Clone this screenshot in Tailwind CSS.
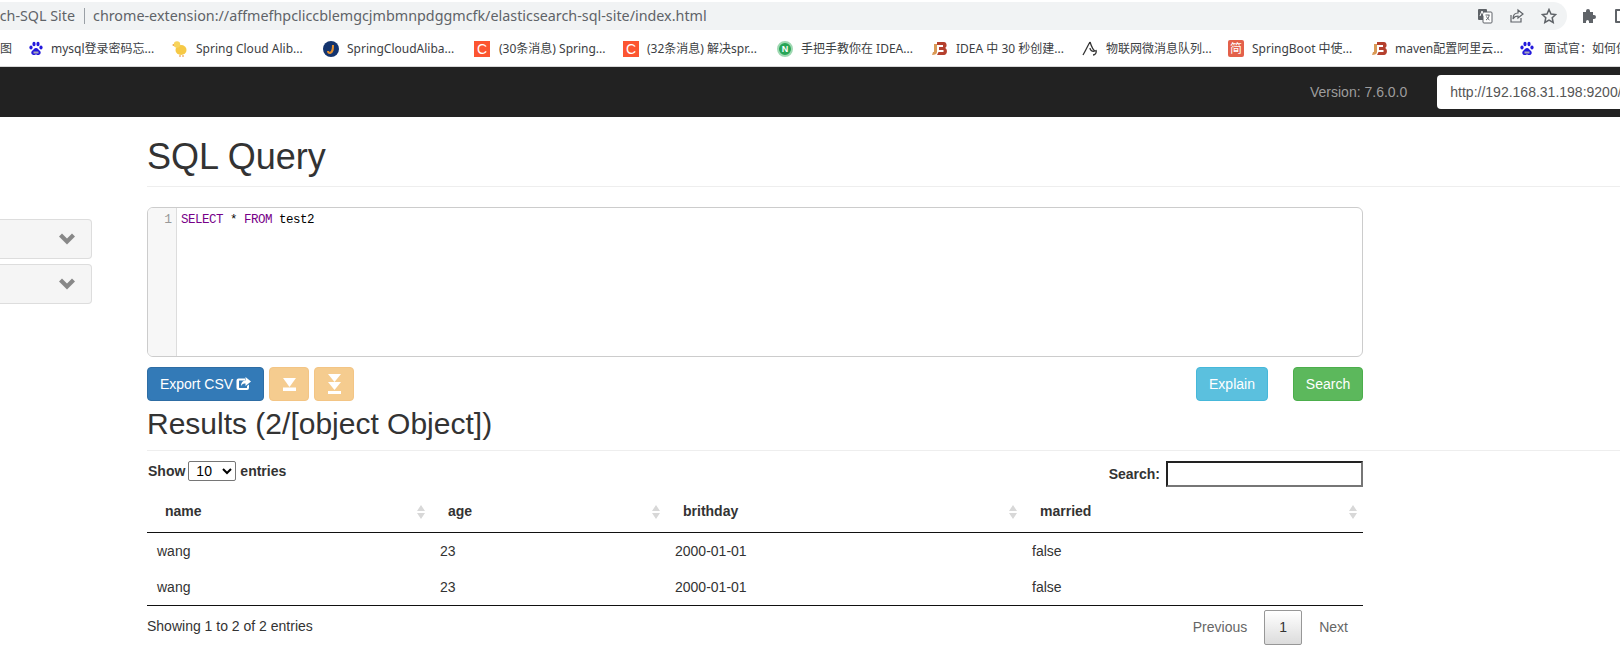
<!DOCTYPE html>
<html lang="en">
<head>
<meta charset="utf-8">
<title>Elasticsearch-SQL Site</title>
<script src="https://cdn.jsdelivr.net/npm/@tailwindcss/browser@4"></script>
</head>
<body class="w-[1620px] h-[666px] overflow-hidden bg-white text-[#333] font-['Liberation_Sans','Noto_Sans_CJK_SC',sans-serif] text-[14px]">

<!-- browser address bar -->
<div class="h-[31px] pt-[2px] flex items-start overflow-hidden font-['Noto_Sans','Noto_Sans_CJK_SC',sans-serif]">
  <div class="w-[1567px] h-[28px] bg-[#f1f3f4] rounded-r-[14px] flex items-center shrink-0">
    <div class="w-[75px] overflow-hidden whitespace-nowrap flex justify-end text-[14.300px] text-[#5f6368] shrink-0">ch-SQL Site</div>
    <div class="w-px h-[16px] bg-[#9aa0a6] ml-[9px] mr-[8px] shrink-0"></div>
    <div class="text-[14.340px] text-[#5f6368] whitespace-nowrap">chrome-extension://affmefhpcliccblemgcjmbmnpdggmcfk/elasticsearch-sql-site/index.html</div>
    <div class="ml-auto flex items-center gap-[16px] pr-[10px]">
      <svg width="16" height="16" viewBox="0 0 16 16"><rect x="1" y="1" width="9" height="11" rx="1" fill="#5f6368"/><rect x="6" y="4" width="9" height="11" rx="1" fill="#fff" stroke="#5f6368"/><path d="M3 8l2-5 2 5" fill="none" stroke="#fff"/><path d="M8.500 7h4M9 12c2-1 3-3 3-5M9.500 8.500c1 2 2 3 3 3.500" fill="none" stroke="#5f6368"/></svg>
      <svg width="16" height="16" viewBox="0 0 16 16" fill="none" stroke="#5f6368" stroke-width="1.200"><path d="M2 7v7h10V10"/><path d="M9 2l5 4-5 4V8C6 8 5 9 4 11c0-4 2-6 5-6z"/></svg>
      <svg width="16" height="16" viewBox="0 0 16 16" fill="none" stroke="#5f6368" stroke-width="1.500"><path d="M8 1.500l2 4.500 4.700.5-3.500 3.200 1 4.800L8 12.100l-4.200 2.400 1-4.800L1.300 6.500 6 6z"/></svg>
    </div>
  </div>
  <div class="flex items-center gap-[18px] h-[28px] pl-[14px] shrink-0">
    <svg width="16" height="16" viewBox="0 0 16 16" fill="#5f6368"><path d="M2 4h3V3a2 2 0 0 1 4 0v1h3v3h1a2 2 0 0 1 0 4h-1v4H8v-1.500a1.500 1.500 0 0 0-3 0V15H2z"/></svg>
    <div class="w-[14px] h-[14px] border-2 border-[#5f6368] rounded-[1px] shrink-0"></div>
  </div>
</div>

<!-- bookmarks -->
<div class="h-[35px] flex items-center whitespace-nowrap overflow-hidden text-[12px] text-[#3c4043] font-['Noto_Sans','Noto_Sans_CJK_SC',sans-serif]">
  <div class="w-[29px] shrink-0 overflow-hidden">图</div>
  <div class="w-[143px] shrink-0 flex items-center gap-[8px]">
    <svg width="14" height="16" viewBox="0 0 14 16" fill="#2319dc"><ellipse cx="2" cy="6.500" rx="1.600" ry="2"/><ellipse cx="5" cy="3" rx="1.600" ry="2.200"/><ellipse cx="9" cy="3" rx="1.600" ry="2.200"/><ellipse cx="12" cy="6.500" rx="1.600" ry="2"/><path d="M7 7c2 0 2.500 2 4 3 1.500 1.500.5 4-2 4-1 0-1.500-.5-2-.5s-1 .5-2 .5c-2.500 0-3.500-2.500-2-4 1.500-1 2-3 4-3z"/><path d="M4.500 10.500h5v2h-5z" fill="#aab"/></svg>
    <span>mysql登录密码忘...</span>
  </div>
  <div class="w-[151px] shrink-0 flex items-center gap-[8px]">
    <svg width="16" height="18" viewBox="0 0 16 18"><ellipse cx="9" cy="10" rx="5.500" ry="5" fill="#f6c945"/><circle cx="5" cy="4.500" r="3.200" fill="#f8d45c"/><path d="M2 4L0 5l2 1z" fill="#e8912d"/><path d="M8 15v2M11 15v2" stroke="#e8912d"/></svg>
    <span>Spring Cloud Alib...</span>
  </div>
  <div class="w-[151px] shrink-0 flex items-center gap-[8px]">
    <svg width="16" height="16" viewBox="0 0 16 16"><circle cx="8" cy="8" r="8" fill="#14346e"/><path d="M10 4c0 4 0 7-3 8-1 0-2-1-2-2" fill="none" stroke="#e8912d" stroke-width="2"/></svg>
    <span>SpringCloudAliba...</span>
  </div>
  <div class="w-[149px] shrink-0 flex items-center gap-[9px]">
    <div class="w-[16px] h-[16px] bg-[#fc5531] text-white text-[14px] leading-[16px] text-center font-['Liberation_Sans']">C</div>
    <span>(30条消息) Spring...</span>
  </div>
  <div class="w-[154px] shrink-0 flex items-center gap-[8px]">
    <div class="w-[16px] h-[16px] bg-[#fc5531] text-white text-[14px] leading-[16px] text-center font-['Liberation_Sans']">C</div>
    <span>(32条消息) 解决spr...</span>
  </div>
  <div class="w-[154px] shrink-0 flex items-center gap-[8px]">
    <div class="w-[16px] h-[16px] rounded-full bg-[#27a556] border-2 border-[#9fd8b2] text-white text-[9px] font-bold leading-[12px] text-center font-['Liberation_Sans']">N</div>
    <span>手把手教你在 IDEA...</span>
  </div>
  <div class="w-[151px] shrink-0 flex items-center gap-[8px]">
    <svg width="17" height="15" viewBox="0 0 17 15"><path d="M6 1h7c3 0 3.500 5 1 6 3 1 2.500 7-1 7H6l1.500-3h5V9H8V6h4V4H6z" fill="#b5402e"/><path d="M3 3h3v8c0 2-2 3-5 3l1-3c1 0 1 0 1-1z" fill="#d99a55"/></svg>
    <span>IDEA 中 30 秒创建...</span>
  </div>
  <div class="w-[146px] shrink-0 flex items-center gap-[8px]">
    <svg width="16" height="16" viewBox="0 0 16 16" fill="none" stroke="#333" stroke-width="1.300"><path d="M8 1C6 4 4 9 1 14M8 1c1 3 3 8 5 9-3 1-5-1-5-3M11 14c2 0 4-2 3-5"/></svg>
    <span>物联网微消息队列...</span>
  </div>
  <div class="w-[143px] shrink-0 flex items-center gap-[8px]">
    <div class="w-[16px] h-[17px] bg-[#e3604a] rounded-[2px] text-white text-[12px] leading-[17px] text-center">简</div>
    <span>SpringBoot 中使...</span>
  </div>
  <div class="w-[149px] shrink-0 flex items-center gap-[7px]">
    <svg width="17" height="15" viewBox="0 0 17 15"><path d="M6 1h7c3 0 3.500 5 1 6 3 1 2.500 7-1 7H6l1.500-3h5V9H8V6h4V4H6z" fill="#b5402e"/><path d="M3 3h3v8c0 2-2 3-5 3l1-3c1 0 1 0 1-1z" fill="#d99a55"/></svg>
    <span>maven配置阿里云...</span>
  </div>
  <div class="flex items-center gap-[10px] shrink-0">
    <svg width="14" height="16" viewBox="0 0 14 16" fill="#2319dc"><ellipse cx="2" cy="6.500" rx="1.600" ry="2"/><ellipse cx="5" cy="3" rx="1.600" ry="2.200"/><ellipse cx="9" cy="3" rx="1.600" ry="2.200"/><ellipse cx="12" cy="6.500" rx="1.600" ry="2"/><path d="M7 7c2 0 2.500 2 4 3 1.500 1.500.5 4-2 4-1 0-1.500-.5-2-.5s-1 .5-2 .5c-2.500 0-3.500-2.500-2-4 1.500-1 2-3 4-3z"/><path d="M4.500 10.500h5v2h-5z" fill="#aab"/></svg>
    <span>面试官：如何保证...</span>
  </div>
</div>

<!-- navbar -->
<div class="h-[50px] bg-[#222] border-t border-[#d8d8d8] flex items-center whitespace-nowrap box-content">
  <div class="ml-[1310px] text-[#9d9d9d] shrink-0">Version: 7.6.0.0</div>
  <input class="ml-[30px] w-[260px] h-[34px] px-[13px] rounded-[4px] bg-white text-[#555] text-[14px] shrink-0" value="http://192.168.31.198:9200/">
</div>

<div class="flex">
  <!-- sidebar -->
  <div class="w-[92px] shrink-0 mr-[55px] pt-[102px] flex flex-col gap-[5px]">
    <div class="h-[40px] bg-[#f5f5f5] border border-[#ddd] border-l-0 rounded-r-[4px] flex items-center justify-end pr-[16px]">
      <svg width="16" height="12" viewBox="0 0 16 12" fill="#888"><path d="M0 3.500L3 .500l5 5 5-5 3 3-8 8z"/></svg>
    </div>
    <div class="h-[40px] bg-[#f5f5f5] border border-[#ddd] border-l-0 rounded-r-[4px] flex items-center justify-end pr-[16px]">
      <svg width="16" height="12" viewBox="0 0 16 12" fill="#888"><path d="M0 3.500L3 .500l5 5 5-5 3 3-8 8z"/></svg>
    </div>
  </div>

  <!-- main column -->
  <div class="flex-1 min-w-0">
    <div class="pt-[20px] pb-[9px] border-b border-[#eee]">
      <h1 class="text-[36px] leading-[40px] font-normal">SQL Query</h1>
    </div>

    <div class="w-[1216px]">
      <div class="mt-[20px] h-[150px] border border-[#ccc] rounded-[6px] flex overflow-hidden font-['Liberation_Mono',monospace] leading-[15px]">
        <div class="w-[29px] bg-[#f7f7f7] border-r border-[#ddd] text-right pr-[4px] pt-[4px] text-[#999] text-[13px] shrink-0">1</div>
        <div class="pl-[4px] pt-[5px] text-black whitespace-pre text-[12.500px] tracking-[-0.500px]"><span class="text-[#708]">SELECT</span> * <span class="text-[#708]">FROM</span> test2</div>
      </div>

      <div class="mt-[10px] flex h-[34px]">
        <button class="w-[117px] bg-[#337ab7] border border-[#2e6da4] rounded-[4px] text-white flex items-center justify-center gap-[3px]">
          Export CSV
          <svg width="15" height="14" viewBox="0 0 15 14" fill="#fff"><path d="M2.500 1.500H9v2H3.500a.5.5 0 0 0-.5.5v6.500c0 .3.200.5.5.5h7a.5.5 0 0 0 .5-.5V9l2-1.500v3.500a2 2 0 0 1-2 2H2.500a2 2 0 0 1-2-2V3.500a2 2 0 0 1 2-2z"/><path d="M9.500 0L15 4.500 9.500 9V6.500C7.500 6.500 6 7 5 9c0-3 1.500-5.500 4.500-5.500z"/></svg>
        </button>
        <button class="ml-[5px] w-[40px] bg-[#f5cc8f] border border-[#f3c585] rounded-[4px] flex items-center justify-center">
          <svg width="13" height="13" viewBox="0 0 13 13" fill="#fff"><path d="M0 0h13L6.500 9z"/><rect y="9.500" width="13" height="3.500"/></svg>
        </button>
        <button class="ml-[5px] w-[40px] bg-[#f5cc8f] border border-[#f3c585] rounded-[4px] flex items-center justify-center">
          <svg width="13" height="20" viewBox="0 0 13 20" fill="#fff"><path d="M0 0h13L6.500 8z"/><path d="M0 8h13l-6.500 8z"/><rect y="17" width="13" height="3"/></svg>
        </button>
        <button class="ml-auto w-[72px] bg-[#5bc0de] border border-[#46b8da] rounded-[4px] text-white">Explain</button>
        <button class="ml-[25px] w-[70px] bg-[#5cb85c] border border-[#4cae4c] rounded-[4px] text-white">Search</button>
      </div>
    </div>

    <div class="mt-[6px] pb-[10px] border-b border-[#eee]">
      <h2 class="text-[30px] leading-[33px] font-normal">Results (2/[object Object])</h2>
    </div>

    <div class="w-[1216px] mt-[10px]">
      <div class="flex justify-between items-start h-[31px]">
        <label class="flex items-center h-[20px] pl-[1px] font-bold text-[14px]">Show
          <select class="ml-[3px] mr-[4px] w-[48px] h-[20px] border border-[#767676] rounded-[2px] pl-[3px] font-normal text-[14px] text-black">
            <option>10</option>
          </select>
          entries</label>
        <label class="flex items-center font-bold text-[14px]">Search:
          <input class="ml-[6px] w-[197px] h-[26px] border-2 border-t-[#222] border-l-[#222] border-r-[#767676] border-b-[#767676]">
        </label>
      </div>

      <table class="w-full table-fixed border-collapse">
        <colgroup><col class="w-[283px]"><col class="w-[235px]"><col class="w-[357px]"><col class="w-[341px]"></colgroup>
        <thead>
          <tr class="h-[40px] border-b border-[#111] text-[14px]">
            <th class="pl-[18px] pr-[4px] text-left font-bold"><div class="flex items-center justify-between">name<svg width="10" height="16" viewBox="0 0 10 16" fill="#d8d8d8"><path d="M5 1l4 6H1zM1 9h8l-4 6z"/></svg></div></th>
            <th class="pl-[18px] pr-[4px] text-left font-bold"><div class="flex items-center justify-between">age<svg width="10" height="16" viewBox="0 0 10 16" fill="#d8d8d8"><path d="M5 1l4 6H1zM1 9h8l-4 6z"/></svg></div></th>
            <th class="pl-[18px] pr-[4px] text-left font-bold"><div class="flex items-center justify-between">brithday<svg width="10" height="16" viewBox="0 0 10 16" fill="#d8d8d8"><path d="M5 1l4 6H1zM1 9h8l-4 6z"/></svg></div></th>
            <th class="pl-[18px] pr-[5px] text-left font-bold"><div class="flex items-center justify-between">married<svg width="10" height="16" viewBox="0 0 10 16" fill="#d8d8d8"><path d="M5 1l4 6H1zM1 9h8l-4 6z"/></svg></div></th>
          </tr>
        </thead>
        <tbody class="border-b border-[#111]">
          <tr class="h-[36px]"><td class="pl-[10px] pt-[2px]">wang</td><td class="pl-[10px] pt-[2px]">23</td><td class="pl-[10px] pt-[2px]">2000-01-01</td><td class="pl-[10px] pt-[2px]">false</td></tr>
          <tr class="h-[37px]"><td class="pl-[10px] pt-[2px]">wang</td><td class="pl-[10px] pt-[2px]">23</td><td class="pl-[10px] pt-[2px]">2000-01-01</td><td class="pl-[10px] pt-[2px]">false</td></tr>
        </tbody>
      </table>

      <div class="flex justify-between items-start mt-[4px]">
        <div class="pt-[6px]">Showing 1 to 2 of 2 entries</div>
        <div class="flex items-center">
          <span class="pl-[14px] pr-[15px] text-[#666]">Previous</span>
          <span class="ml-[2px] mr-[3px] w-[38px] h-[35px] flex items-center justify-center border border-[#979797] rounded-[2px] bg-gradient-to-b from-white to-[#dcdcdc] text-[#333]">1</span>
          <span class="pl-[14px] pr-[15px] text-[#666]">Next</span>
        </div>
      </div>
    </div>
  </div>
</div>
</body>
</html>
